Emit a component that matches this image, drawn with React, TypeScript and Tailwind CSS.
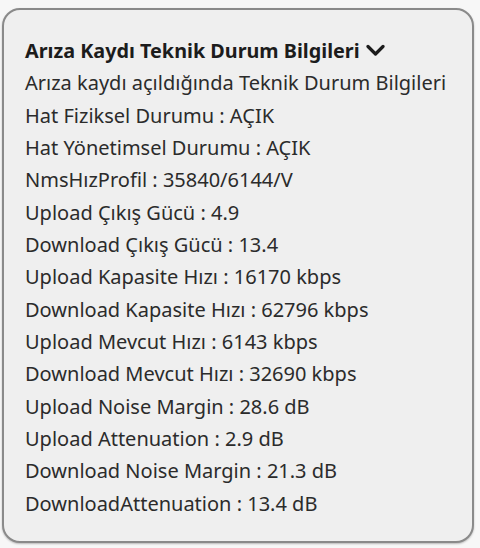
import React from "react";

const rows = [
  "Arıza kaydı açıldığında Teknik Durum Bilgileri",
  "Hat Fiziksel Durumu : AÇIK",
  "Hat Yönetimsel Durumu : AÇIK",
  "NmsHızProfil : 35840/6144/V",
  "Upload Çıkış Gücü : 4.9",
  "Download Çıkış Gücü : 13.4",
  "Upload Kapasite Hızı : 16170 kbps",
  "Download Kapasite Hızı : 62796 kbps",
  "Upload Mevcut Hızı : 6143 kbps",
  "Download Mevcut Hızı : 32690 kbps",
  "Upload Noise Margin : 28.6 dB",
  "Upload Attenuation : 2.9 dB",
  "Download Noise Margin : 21.3 dB",
  "DownloadAttenuation : 13.4 dB",
];

export default function App() {
  return (
    <div
      className="w-[480px] h-[548px] bg-[#f7f7f7] pt-[8px] pl-[2px]"
      style={{ fontFamily: '"Segoe UI", "Noto Sans", "Open Sans", sans-serif' }}
    >
      <div className="w-[472px] h-[535px] rounded-[18px] border-2 border-[#8a8a8a] bg-[#efefef] pl-[21px] pt-[25px] text-[20px] leading-[32.35px] text-[#2b2b2b] shadow-[0_1px_2px_rgba(0,0,0,0.25)]">
        <div className="flex items-center font-bold text-[#1c1c1c] text-[19.8px]">
          <span>Arıza Kaydı Teknik Durum Bilgileri</span>
          <svg
            className="ml-[6px] mt-[-1px]"
            width="19"
            height="13"
            viewBox="0 0 19 13"
            fill="none"
          >
            <path
              d="M2 2.5 L9.5 10 L17 2.5"
              stroke="#1c1c1c"
              strokeWidth="3.2"
              strokeLinecap="round"
              strokeLinejoin="round"
            />
          </svg>
        </div>
        {rows.map((r) => (
          <div key={r} className="whitespace-nowrap">
            {r}
          </div>
        ))}
      </div>
    </div>
  );
}
